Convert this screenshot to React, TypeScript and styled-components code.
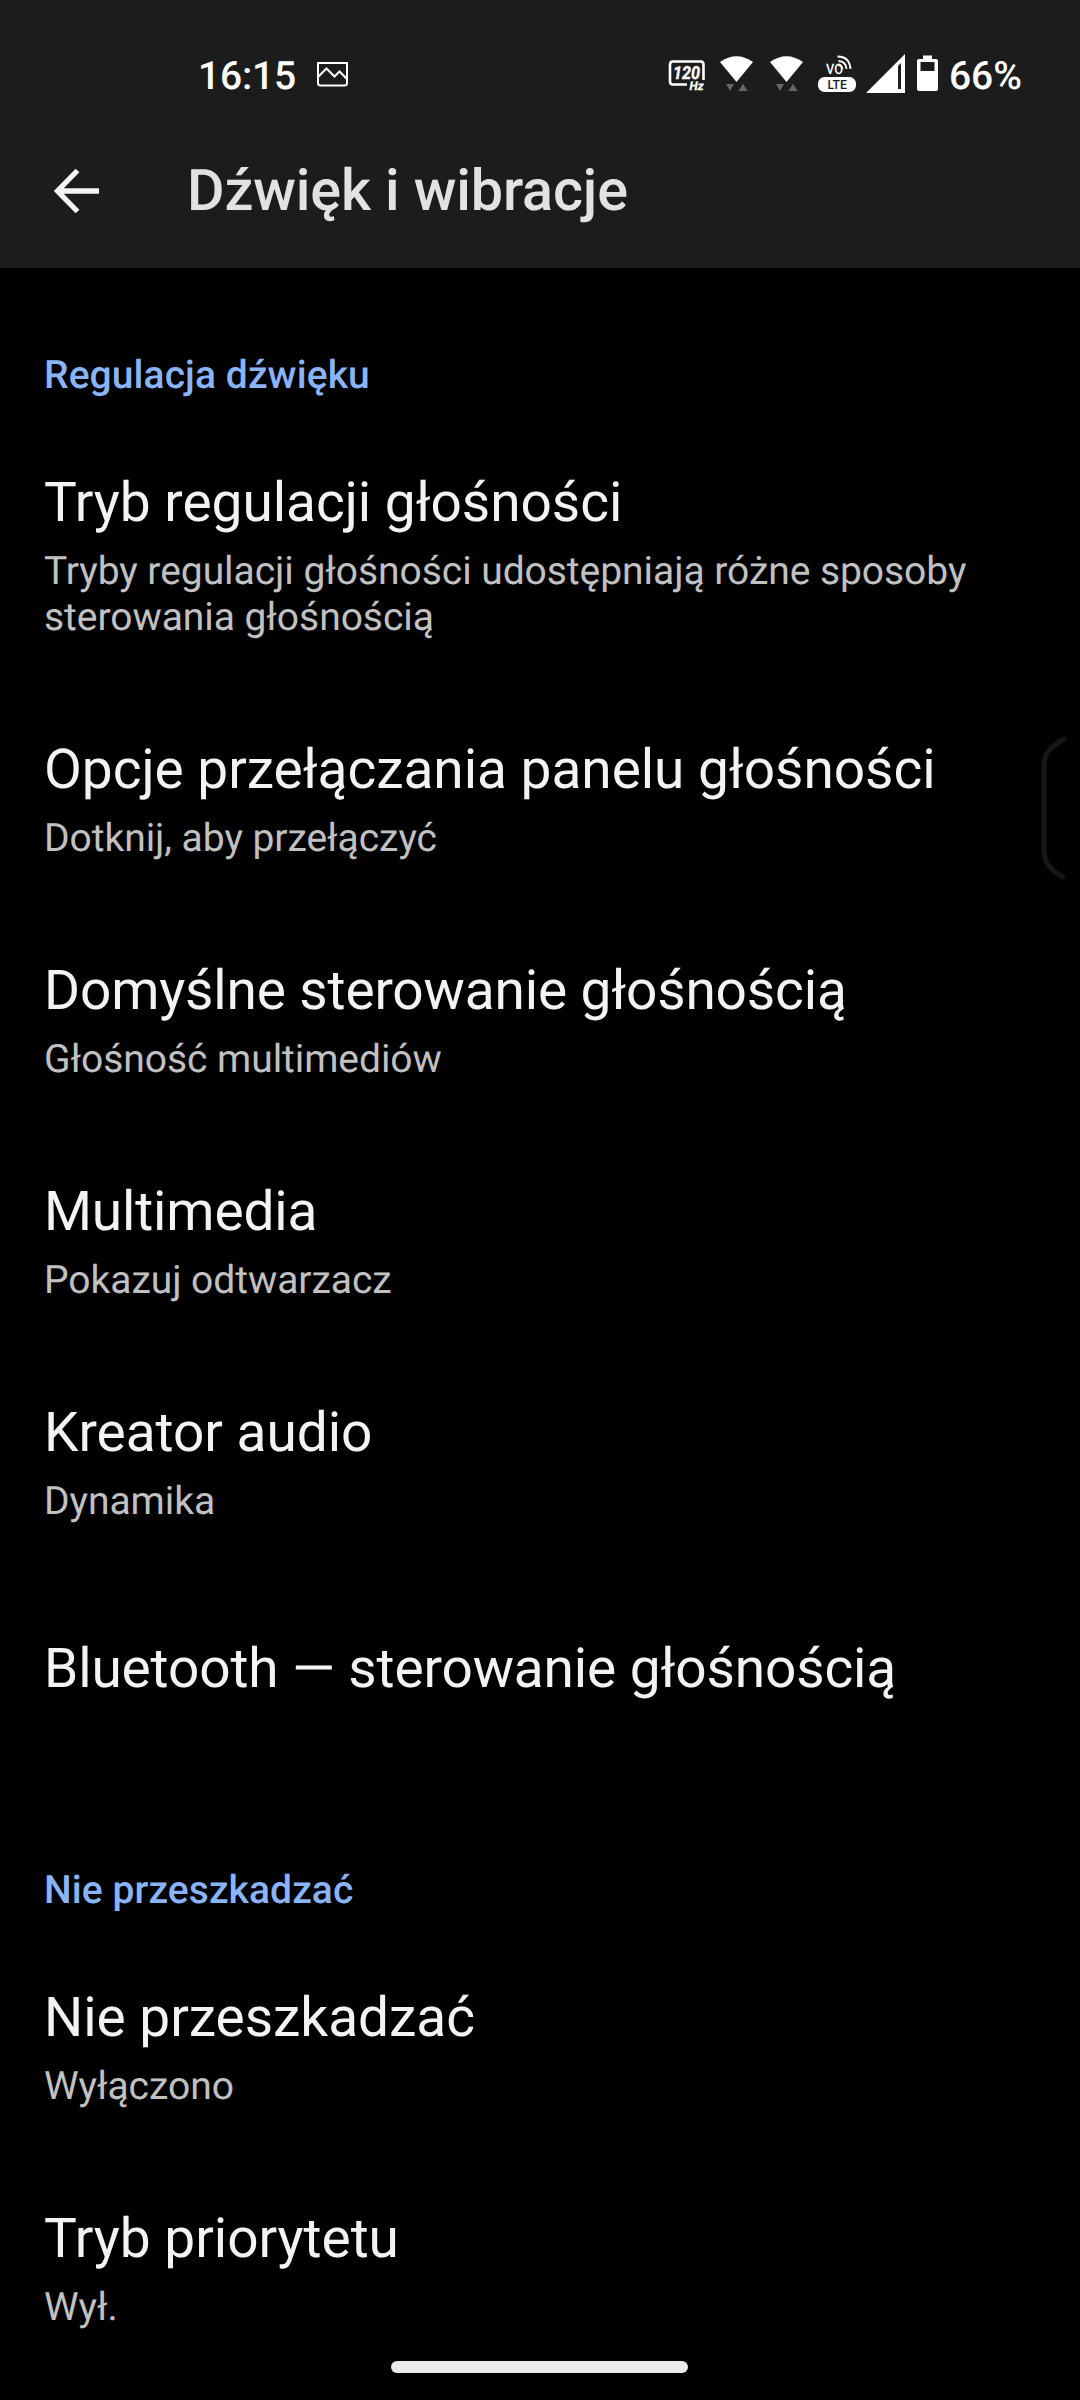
import React from 'react';
import styled, { createGlobalStyle } from 'styled-components';

const Global = createGlobalStyle`
  html, body { margin: 0; padding: 0; background: #000; }
  * { box-sizing: border-box; }
`;

const Screen = styled.div`
  position: relative;
  width: 1080px;
  height: 2400px;
  overflow: hidden;
  background: #000;
  font-family: Roboto, "Noto Sans", sans-serif;
  text-rendering: geometricPrecision;
`;

const Header = styled.header`
  height: 268px;
  background: #1c1c1c;
  display: flex;
  flex-direction: column;
`;

const StatusBar = styled.div`
  height: 120px;
  padding: 31px 58px 0 198px;
  display: flex;
  justify-content: space-between;
  align-items: flex-start;
  color: #fff;
  font-size: 39px;
  line-height: 90px;
  font-weight: 500;
`;

const StatusGroup = styled.div`
  display: flex;
  align-items: flex-start;
  height: 90px;
`;

const Icon = styled.svg<{ $left?: number }>`
  display: block;
  flex: none;
  margin-left: ${(p) => p.$left ?? 0}px;
  overflow: visible;
`;

const Clock = styled.span`
  letter-spacing: -0.2px;
`;

const Percent = styled.span`
  margin-left: 11px;
`;

const TitleBar = styled.div`
  height: 148px;
  display: flex;
  align-items: flex-start;
  padding-left: 50px;
`;

const BackButton = styled.button`
  width: 137px;
  height: 142px;
  padding: 0;
  border: 0;
  background: none;
`;

const PageTitle = styled.h1`
  margin: 0;
  color: #e2e2e2;
  font-size: 57.5px;
  line-height: 144px;
  font-weight: 500;
  letter-spacing: -0.13px;
`;

const Section = styled.section`
  display: flex;
  flex-direction: column;
  padding-left: 44px;
`;

const SectionTitle = styled.h2<{ $top: number }>`
  margin: 0;
  padding-top: ${(p) => p.$top}px;
  height: ${(p) => p.$top + 70}px;
  color: #8ab4f8;
  font-size: 39px;
  line-height: 46px;
  font-weight: 500;
  letter-spacing: 0.08px;
`;

const Row = styled.div<{ $single?: boolean }>`
  display: flex;
  flex-direction: column;
  gap: 13px;
  padding: ${(p) => (p.$single ? '64px 0 62px' : '49px 0')};
`;

const RowTitle = styled.div<{ $tracking?: number }>`
  color: #f3f3f3;
  font-size: 55px;
  line-height: 64px;
  letter-spacing: ${(p) => p.$tracking ?? -0.03}px;
`;

const RowText = styled.div`
  width: 980px;
  color: #c1c1c1;
  font-size: 39px;
  line-height: 46px;
  letter-spacing: -0.05px;
  white-space: pre-line;
`;

const EdgeHandle = styled.svg`
  position: absolute;
  left: 1040px;
  top: 734px;
`;

const NavPill = styled.div`
  position: absolute;
  left: 391px;
  top: 2361px;
  width: 297px;
  height: 12px;
  border-radius: 6px;
  background: #ebebeb;
`;

const ImageIcon = () => (
  <Icon $left={20} width="32" height="90" viewBox="316 31 32 90" fill="none" stroke="#fff" strokeWidth="2">
    <path d="M318 63H347V83Q347 85.500 344.500 85.500H320.500Q318 85.500 318 83Z" />
    <path d="M318 77L326.500 68.500L334.500 76.500L339.500 71.500L347 79" />
  </Icon>
);

const RefreshRateIcon = () => (
  <Icon width="38" height="90" viewBox="668 31 38 90" fill="none">
    <path d="M687 84.500H673Q670 84.500 670 81.500V64.500Q670 61.500 673 61.500H700.500Q703.500 61.500 703.500 64.500V80" stroke="#fff" strokeWidth="2.600" />
    <text x="673" y="78.500" fontFamily="Roboto" fontSize="18" fontWeight="700" fontStyle="italic" fill="#fff" stroke="#fff" strokeWidth="0.400" textLength="27" lengthAdjust="spacingAndGlyphs">120</text>
    <text x="689.500" y="90" fontFamily="Roboto" fontSize="12" fontWeight="700" fontStyle="italic" fill="#fff" stroke="#fff" strokeWidth="0.300" textLength="14" lengthAdjust="spacingAndGlyphs">Hz</text>
  </Icon>
);

const WifiIcon = ({ left }: { left: number }) => (
  <Icon $left={left} width="33" height="90" viewBox="720.500 31 33 90">
    <path d="M720.500 62Q737 50.500 753.500 62L737 82Z" fill="#fff" />
    <path d="M726.500 84H734.500L730.500 91Z M739 91H748L743.500 83.500Z" fill="#666" />
  </Icon>
);

const VolteIcon = () => (
  <Icon $left={15} width="38" height="90" viewBox="818 31 38 90" fill="none">
    <text x="826" y="74" fontFamily="Roboto" fontSize="14.500" fontWeight="500" fill="#fff" textLength="17" lengthAdjust="spacingAndGlyphs">VO</text>
    <path d="M837.500 56.500Q849.500 56.500 850.500 69M838.500 61Q846 61.500 846.500 69M838 65Q842 65.500 842.500 69" stroke="#fff" strokeWidth="1.800" />
    <rect x="818" y="77" width="38" height="15" rx="6.500" fill="#fff" />
    <text x="827.500" y="89" fontFamily="Roboto" fontSize="12.500" fontWeight="500" fill="#1c1c1c" textLength="19.500" lengthAdjust="spacingAndGlyphs">LTE</text>
  </Icon>
);

const SignalIcon = () => (
  <Icon $left={10} width="39" height="90" viewBox="866 31 39 90">
    <path d="M866 93L905 54V93Z" fill="#fff" />
    <path d="M898 66L901 63V89H898Z" fill="#1c1c1c" />
  </Icon>
);

const BatteryIcon = () => (
  <Icon $left={12} width="21" height="90" viewBox="917 31 21 90">
    <path fillRule="evenodd" d="M923 55.500H932V59H936Q938 59 938 61V89Q938 91 936 91H919Q917 91 917 89V61Q917 59 919 59H923ZM920.500 62V71H934.500V62Z" fill="#fff" />
  </Icon>
);

const BackIcon = () => (
  <Icon width="56" height="142" viewBox="50 120 56 142" fill="none" stroke="#f3f3f3" strokeWidth="5.300">
    <path d="M99 191H58M77.500 170.500L57.500 191L77.500 211.500" />
  </Icon>
);

interface Item {
  title: string;
  text?: string;
  tracking?: number;
}

const soundItems: Item[] = [
  { title: 'Tryb regulacji głośności', text: 'Tryby regulacji głośności udostępniają różne sposoby\nsterowania głośnością' },
  { title: 'Opcje przełączania panelu głośności', text: 'Dotknij, aby przełączyć' },
  { title: 'Domyślne sterowanie głośnością', text: 'Głośność multimediów', tracking: -0.15 },
  { title: 'Multimedia', text: 'Pokazuj odtwarzacz', tracking: -0.15 },
  { title: 'Kreator audio', text: 'Dynamika' },
  { title: 'Bluetooth — sterowanie głośnością', tracking: -0.13 },
];

const quietItems: Item[] = [
  { title: 'Nie przeszkadzać', text: 'Wyłączono' },
  { title: 'Tryb priorytetu', text: 'Wył.' },
];

const Rows = ({ items }: { items: Item[] }) => (
  <>
    {items.map((item) => (
      <Row key={item.title} $single={!item.text}>
        <RowTitle $tracking={item.tracking}>{item.title}</RowTitle>
        {item.text && <RowText>{item.text}</RowText>}
      </Row>
    ))}
  </>
);

export default function App() {
  return (
    <Screen>
      <Global />
      <Header>
        <StatusBar>
          <StatusGroup>
            <Clock>16:15</Clock>
            <ImageIcon />
          </StatusGroup>
          <StatusGroup>
            <RefreshRateIcon />
            <WifiIcon left={14} />
            <WifiIcon left={17} />
            <VolteIcon />
            <SignalIcon />
            <BatteryIcon />
            <Percent>66%</Percent>
          </StatusGroup>
        </StatusBar>
        <TitleBar>
          <BackButton aria-label="Wstecz">
            <BackIcon />
          </BackButton>
          <PageTitle>Dźwięk i wibracje</PageTitle>
        </TitleBar>
      </Header>
      <Section>
        <SectionTitle $top={84}>Regulacja dźwięku</SectionTitle>
        <Rows items={soundItems} />
      </Section>
      <Section>
        <SectionTitle $top={104}>Nie przeszkadzać</SectionTitle>
        <Rows items={quietItems} />
      </Section>
      <EdgeHandle width="32" height="150" viewBox="1040 734 32 150" fill="none" stroke="#161616" strokeWidth="5" strokeLinecap="round">
        <path d="M1064 739C1052 746 1044 752 1044 766V850C1044 864 1052 871 1063 877" />
      </EdgeHandle>
      <NavPill />
    </Screen>
  );
}
